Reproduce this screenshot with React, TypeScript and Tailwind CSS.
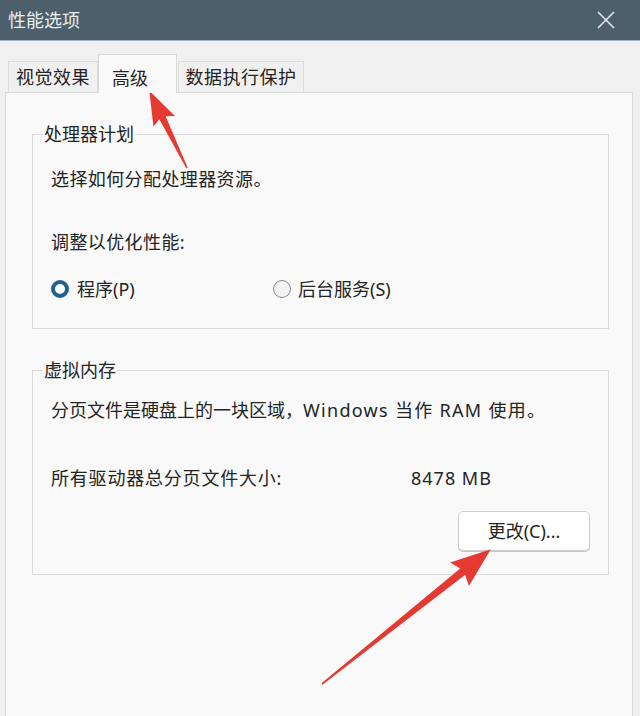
import React from 'react';

const FONT = { fontFamily: '"Noto Sans", "Noto Sans CJK SC", sans-serif' };

type ArrowProps = { x: number; y: number; len: number; angle: number };

// red pointer arrow, drawn pointing right then rotated into place
function Arrow({ x, y, len, angle }: ArrowProps) {
  const head = len > 120 ? 36 : 30;
  const hw = len > 120 ? 15 : 12;
  const w = len > 120 ? 4 : 3.5;
  const pts = [
    [0, -0.8],
    [len - head, -w],
    [len - head - 4, -hw],
    [len, 0],
    [len - head - 4, hw],
    [len - head, w],
    [0, 0.8],
  ]
    .map((p) => p.join(','))
    .join(' ');
  return (
    <g transform={`translate(${x} ${y}) rotate(${angle})`}>
      <polygon points={pts} fill="#e43a32" />
    </g>
  );
}

function Tab({ label, active, width }: { label: string; active?: boolean; width: string }) {
  if (active) {
    return (
      <div className={`relative z-10 -mb-px flex h-[39px] items-center border border-b-0 border-[#d9d9d9] bg-[#f9f9f9] pl-[13px] pt-[7px] ${width}`}>
        {label}
      </div>
    );
  }
  return (
    <div className={`flex h-[31px] items-center justify-center border border-b-0 border-[#dcdcdc] bg-[#f0f0f0] tracking-[0.5px] ${width}`}>
      {label}
    </div>
  );
}

function Group({ title, className, children }: { title: string; className?: string; children: React.ReactNode }) {
  return (
    <fieldset className={`ml-[26px] mr-[23px] border border-[#dadada] pl-[10px] pr-[18px] ${className ?? ''}`}>
      <legend className="px-[1px] text-[18px] leading-[20px]">{title}</legend>
      <div className="pl-[8px]">{children}</div>
    </fieldset>
  );
}

export default function App() {
  return (
    <div
      className="relative flex h-[716px] w-[640px] flex-col overflow-hidden bg-[#f0f0f0] text-[18px] leading-[24px] text-[#242424]"
      style={FONT}
    >
      {/* title bar */}
      <div className="flex h-[41px] shrink-0 items-center justify-between border-b border-[#a9b7be] bg-[#4d5f6b] pl-[8px] pr-[24px]">
        <span className="text-[18px] text-[#e9eef1]">性能选项</span>
        <svg width="20" height="20" viewBox="0 0 20 20">
          <path d="M2 2 L18 18 M18 2 L2 18" stroke="#e2e8eb" strokeWidth="1.6" />
        </svg>
      </div>

      {/* tabs */}
      <div className="mt-[13px] flex items-end pl-[8px]">
        <Tab label="视觉效果" width="w-[90px]" />
        <Tab label="高级" active width="w-[79px]" />
        <div className="w-px" />
        <Tab label="数据执行保护" width="w-[126px]" />
      </div>

      {/* panel */}
      <div className="ml-[5px] w-[628px] flex-1 border border-b-0 border-[#d9d9d9] bg-[#f9f9f9] pt-[31px]">
        <Group title="处理器计划">
          <p className="mt-[23px] tracking-[0.4px]">选择如何分配处理器资源。</p>
          <p className="mt-[39px] tracking-[0.4px]">调整以优化性能:</p>
          <div className="mb-[27px] mt-[23px] flex items-center">
            <label className="flex w-[222px] items-center">
              <span className="h-[18px] w-[18px] rounded-full border-[4px] border-[#22608f] bg-white" />
              <span className="ml-[8px]">程序(P)</span>
            </label>
            <label className="flex items-center">
              <span className="h-[18px] w-[18px] rounded-full border border-[#8a8a8a] bg-[#f3f3f3]" />
              <span className="ml-[7px]">后台服务(S)</span>
            </label>
          </div>
        </Group>

        <Group title="虚拟内存" className="mt-[31px]">
          <p className="mt-[18px]">
            分页文件是硬盘上的一块区域，<span className="tracking-[1.3px]">Windows 当作 RAM 使用。</span>
          </p>
          <div className="mt-[44px] flex">
            <span className="w-[360px] tracking-[0.8px]">所有驱动器总分页文件大小:</span>
            <span className="tracking-[1px]">8478 MB</span>
          </div>
          <div className="mb-[23px] mt-[21px] flex justify-end">
            <button className="h-[40px] w-[132px] rounded-[5px] border border-[#cfcfcf] bg-white text-[18px] text-[#242424] shadow-[0_1px_0_#c4c4c4]">
              更改(C)...
            </button>
          </div>
        </Group>
      </div>

      {/* annotation arrows */}
      <svg className="pointer-events-none absolute left-0 top-0" width="640" height="716">
        <Arrow x={187} y={168} len={86} angle={-116} />
        <Arrow x={322} y={684} len={216} angle={-38.6} />
      </svg>
    </div>
  );
}
